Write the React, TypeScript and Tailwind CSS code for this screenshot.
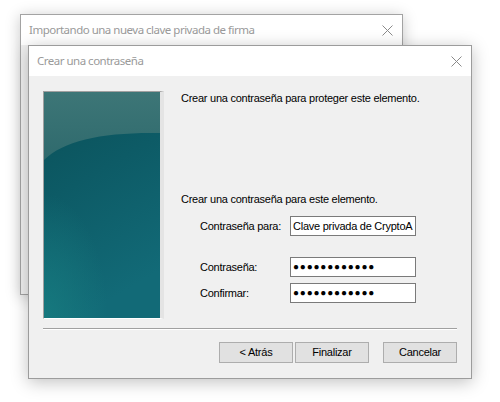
import React from 'react'

const CloseIcon = () => (
  <svg width="11" height="11" viewBox="0 0 11 11" className="block">
    <path d="M0.5 0.5 L10.5 10.5 M10.5 0.5 L0.5 10.5" stroke="#8a8a8a" strokeWidth="1" />
  </svg>
)

const WizardImage = () => (
  <svg width="116" height="226" viewBox="0 0 116 226" className="block">
    <defs>
      <linearGradient id="teal" x1="0" y1="0" x2="0.3" y2="1">
        <stop offset="0" stopColor="#0a5058" />
        <stop offset="0.45" stopColor="#0d5b66" />
        <stop offset="1" stopColor="#126a77" />
      </linearGradient>
      <radialGradient id="glow" cx="0" cy="1" r="0.55">
        <stop offset="0" stopColor="#177c80" stopOpacity="0.85" />
        <stop offset="1" stopColor="#177c80" stopOpacity="0" />
      </radialGradient>
      <linearGradient id="shine" x1="0" y1="0" x2="0" y2="1">
        <stop offset="0" stopColor="#3d7677" />
        <stop offset="1" stopColor="#2f6a6d" />
      </linearGradient>
    </defs>
    <rect width="116" height="226" fill="url(#teal)" />
    <rect width="116" height="226" fill="url(#glow)" />
    <path d="M0 0 H116 V41 C60 40 20 48 0 68 Z" fill="url(#shine)" />
  </svg>
)

const Field = ({ label, value, masked }: { label: string; value: string; masked?: boolean }) => (
  <div className="flex items-center">
    <span className="box-content w-[90px] pl-[19px]">{label}</span>
    <div className="flex h-[20px] w-[126px] items-center overflow-hidden border border-[#7a7a7a] bg-white px-[2px]">
      {masked ? (
        <span className="text-[10px] leading-none tracking-[0.8px] text-black">{value}</span>
      ) : (
        <span className="whitespace-nowrap">{value}</span>
      )}
    </div>
  </div>
)

const App = () => {
  return (
    <div className="relative h-[402px] w-[500px] overflow-hidden bg-white font-['Liberation_Sans',Arial,sans-serif] text-[11px] tracking-[-0.25px] text-black">
      {/* back window */}
      <div className="absolute left-[20px] top-[14px] flex h-[281px] w-[383px] flex-col border border-[#a3a3a3] bg-[#f0f0f0] shadow-[0_2px_14px_rgba(0,0,0,0.22)]">
        <div className="flex h-[30px] items-center justify-between bg-white pl-[8px] pr-[9px]">
          <span className="font-['Noto_Sans',sans-serif] text-[11.5px] tracking-[-0.5px] text-[#9a9a9a]">
            Importando una nueva clave privada de firma
          </span>
          <CloseIcon />
        </div>
      </div>

      {/* front window */}
      <div className="absolute left-[28px] top-[45px] flex h-[334px] w-[444px] flex-col border border-[#9c9c9c] bg-[#f0f0f0] shadow-[0_3px_16px_rgba(0,0,0,0.25)]">
        <div className="flex h-[30px] items-center justify-between bg-white pl-[8px] pr-[9px]">
          <span className="font-['Noto_Sans',sans-serif] text-[11.5px] tracking-[-0.5px] text-[#9a9a9a]">
            Crear una contraseña
          </span>
          <CloseIcon />
        </div>

        <div className="flex flex-1 flex-col pl-[14px] pr-[14px] pt-[15px]">
          <div className="flex">
            <div className="border-l border-t border-[#a0a0a0] border-r-[4px] border-b-[1px] border-r-[#e4e4e4] border-b-white">
              <WizardImage />
            </div>
            <div className="ml-[17px] flex flex-col">
              <p className="mt-[1px] leading-[13px]">
                Crear una contraseña para proteger este elemento.
              </p>
              <p className="mt-[88px] leading-[13px]">
                Crear una contraseña para este elemento.
              </p>
              <div className="mt-[10px]">
                <Field label="Contraseña para:" value="Clave privada de CryptoA" />
              </div>
              <div className="mt-[21px]">
                <Field label="Contraseña:" value="●●●●●●●●●●●●" masked />
              </div>
              <div className="mt-[6px]">
                <Field label="Confirmar:" value="●●●●●●●●●●●●" masked />
              </div>
            </div>
          </div>

          <div className="mt-[9px] h-[2px] border-t border-[#a0a0a0] border-b border-b-white" />

          <div className="mt-[12px] flex justify-end">
            <button className="h-[21px] w-[74px] border border-[#adadad] bg-[#e1e1e1]">&lt; Atrás</button>
            <button className="ml-[2px] h-[21px] w-[74px] border border-[#adadad] bg-[#e1e1e1]">Finalizar</button>
            <button className="ml-[14px] h-[21px] w-[74px] border border-[#adadad] bg-[#e1e1e1]">Cancelar</button>
          </div>
        </div>
      </div>
    </div>
  )
}

export default App
